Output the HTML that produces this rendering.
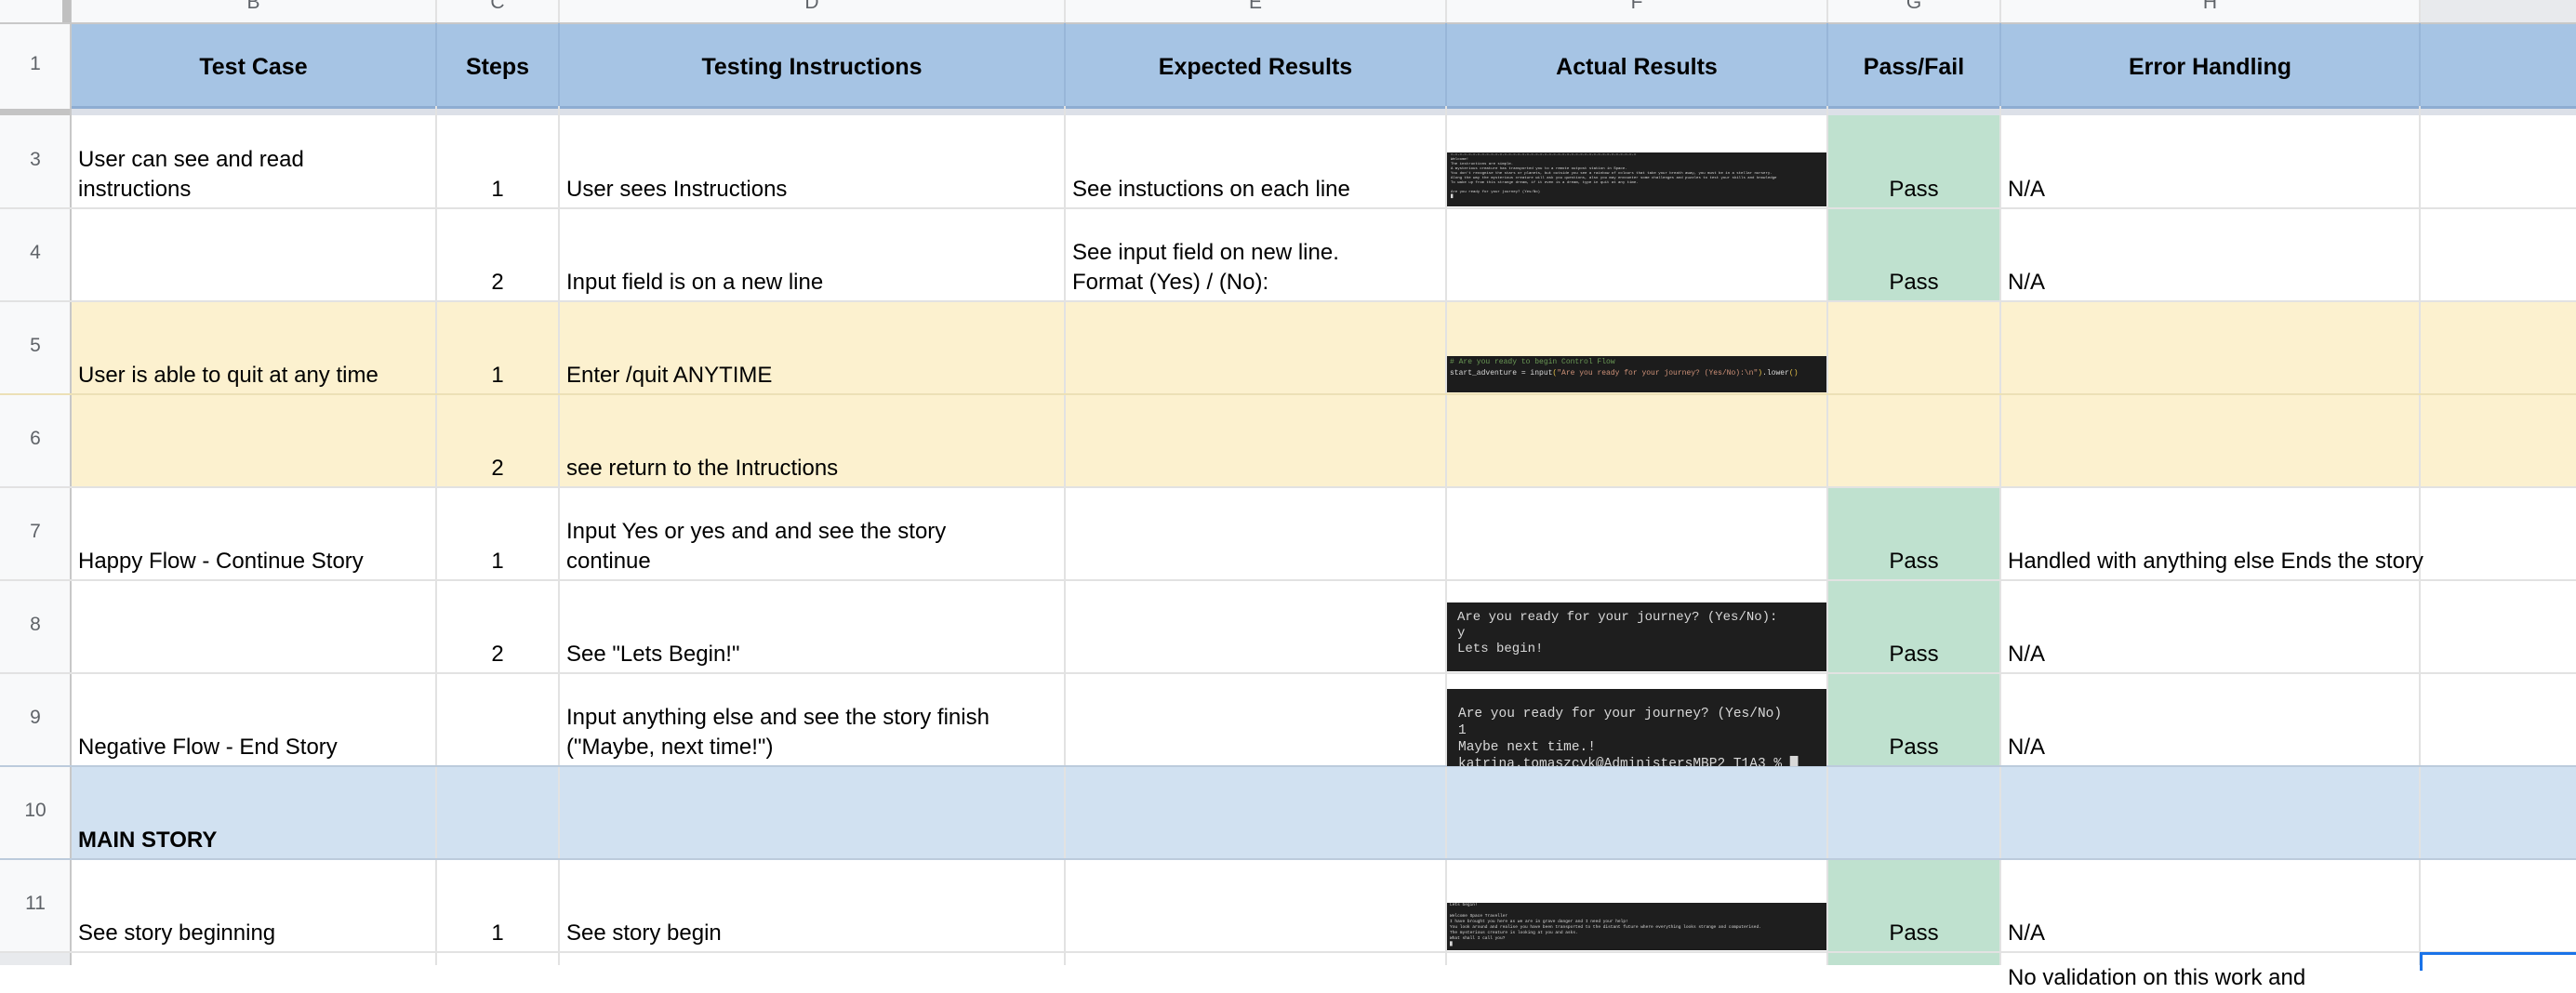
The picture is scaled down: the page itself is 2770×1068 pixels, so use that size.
<!DOCTYPE html>
<html><head><meta charset="utf-8">
<style>
*{margin:0;padding:0;box-sizing:border-box}
body{width:2770px;height:1038px;overflow:hidden;background:#fff;position:relative;font-family:"Liberation Sans",Arial,sans-serif}
.a{position:absolute}
.v{position:absolute;top:0;width:2px;height:1038px;background:#e2e2e2}
.h{position:absolute;left:0;width:2770px;height:2px;background:#e2e2e2}
.t{position:absolute;display:flex;align-items:flex-end;padding:0 8px 4px;font-size:24px;line-height:32px;color:#000;white-space:nowrap;height:100px}
.r{justify-content:center;width:132px;padding:0 0 4px}
.c{justify-content:center}
.hd{position:absolute;top:28px;height:89px;display:flex;align-items:center;justify-content:center;font-weight:bold;font-size:25px;color:#000}
.rn{position:absolute;left:0;width:76px;text-align:center;font-size:21px;color:#5f6368}
.cl{position:absolute;top:-9px;text-align:center;font-size:21px;color:#5f6368}
.term{position:absolute;background:#1e1e1e;color:#d8d8d8;font-family:"Liberation Mono","DejaVu Sans Mono",monospace;white-space:pre;overflow:hidden}
</style></head><body>
<div class="a" style="left:0;top:0;width:2770px;height:25px;background:#f8f9fa"></div>
<div class="a" style="left:2602px;top:0;width:168px;height:25px;background:#e8eaed"></div>
<div class="a" style="left:0;top:25px;width:76px;height:99px;background:#f8f9fa"></div>
<div class="a" style="left:0;top:124px;width:76px;height:914px;background:#f8f9fa"></div>
<div class="a" style="left:0;top:1024px;width:76px;height:14px;background:#e8eaed"></div>
<div class="a" style="left:76px;top:25px;width:2694px;height:89px;background:#a6c4e4"></div>
<div class="a" style="left:76px;top:114px;width:2694px;height:3px;background:#8eadd2"></div>
<div class="a" style="left:76px;top:117px;width:2694px;height:7px;background:#dce0e8"></div>
<div class="a" style="left:0;top:117px;width:76px;height:7px;background:#c4c4c4"></div>
<div class="a" style="left:76px;top:324px;width:2694px;height:200px;background:#fcf1cf"></div>
<div class="a" style="left:76px;top:824px;width:2694px;height:100px;background:#d1e1f1"></div>
<div class="a" style="left:1965px;top:124px;width:186px;height:200px;background:#bfe1cf"></div>
<div class="a" style="left:1965px;top:524px;width:186px;height:300px;background:#bfe1cf"></div>
<div class="a" style="left:1965px;top:924px;width:186px;height:114px;background:#bfe1cf"></div>
<div class="v" style="left:75px;background:#c8c8c8"></div>
<div class="v" style="left:468px"></div><div class="v" style="left:600px"></div>
<div class="v" style="left:1144px"></div><div class="v" style="left:1554px"></div>
<div class="v" style="left:1964px"></div><div class="v" style="left:2150px"></div>
<div class="v" style="left:2601px"></div>
<div class="a" style="left:67px;top:0;width:9px;height:25px;background:#c0c0c0"></div>
<div class="h" style="top:24px;background:#c8c8c8"></div>
<div class="h" style="top:223px"></div><div class="h" style="top:323px"></div>
<div class="h" style="top:423px;background:#ece0b6"></div><div class="h" style="top:523px"></div>
<div class="h" style="top:623px"></div><div class="h" style="top:723px"></div>
<div class="h" style="top:823px;background:#bccbdc"></div><div class="h" style="top:923px;background:#bccbdc"></div>
<div class="h" style="top:1023px"></div>
<div class="a" style="left:468px;top:25px;width:2px;height:89px;background:#98b6d8"></div>
<div class="a" style="left:600px;top:25px;width:2px;height:89px;background:#98b6d8"></div>
<div class="a" style="left:1144px;top:25px;width:2px;height:89px;background:#98b6d8"></div>
<div class="a" style="left:1554px;top:25px;width:2px;height:89px;background:#98b6d8"></div>
<div class="a" style="left:1964px;top:25px;width:2px;height:89px;background:#98b6d8"></div>
<div class="a" style="left:2150px;top:25px;width:2px;height:89px;background:#98b6d8"></div>
<div class="a" style="left:2601px;top:25px;width:2px;height:89px;background:#98b6d8"></div>

<div class="cl" style="left:76px;width:393px">B</div>
<div class="cl" style="left:469px;width:132px">C</div>
<div class="cl" style="left:601px;width:544px">D</div>
<div class="cl" style="left:1145px;width:410px">E</div>
<div class="cl" style="left:1555px;width:410px">F</div>
<div class="cl" style="left:1965px;width:186px">G</div>
<div class="cl" style="left:2151px;width:451px">H</div>

<div class="rn" style="top:57px">1</div>
<div class="rn" style="top:160px">3</div>
<div class="rn" style="top:260px">4</div>
<div class="rn" style="top:360px">5</div>
<div class="rn" style="top:460px">6</div>
<div class="rn" style="top:560px">7</div>
<div class="rn" style="top:660px">8</div>
<div class="rn" style="top:760px">9</div>
<div class="rn" style="top:860px">10</div>
<div class="rn" style="top:960px">11</div>

<div class="hd" style="left:76px;width:393px">Test Case</div>
<div class="hd" style="left:469px;width:132px">Steps</div>
<div class="hd" style="left:601px;width:544px">Testing Instructions</div>
<div class="hd" style="left:1145px;width:410px">Expected Results</div>
<div class="hd" style="left:1555px;width:410px">Actual Results</div>
<div class="hd" style="left:1965px;width:186px">Pass/Fail</div>
<div class="hd" style="left:2151px;width:451px">Error Handling</div>

<div class="t" style="left:76px;top:124px">User can see and read<br>instructions</div>
<div class="t r" style="left:469px;top:124px">1</div>
<div class="t" style="left:601px;top:124px">User sees Instructions</div>
<div class="t" style="left:1145px;top:124px">See instuctions on each line</div>
<div class="t c" style="left:1965px;top:124px;width:186px">Pass</div>
<div class="t" style="left:2151px;top:124px">N/A</div>
<div class="t r" style="left:469px;top:224px">2</div>
<div class="t" style="left:601px;top:224px">Input field is on a new line</div>
<div class="t" style="left:1145px;top:224px">See input field on new line.<br>Format (Yes) / (No):</div>
<div class="t c" style="left:1965px;top:224px;width:186px">Pass</div>
<div class="t" style="left:2151px;top:224px">N/A</div>
<div class="t" style="left:76px;top:324px">User is able to quit at any time</div>
<div class="t r" style="left:469px;top:324px">1</div>
<div class="t" style="left:601px;top:324px">Enter /quit ANYTIME</div>
<div class="t r" style="left:469px;top:424px">2</div>
<div class="t" style="left:601px;top:424px">see return to the Intructions</div>
<div class="t" style="left:76px;top:524px">Happy Flow - Continue Story</div>
<div class="t r" style="left:469px;top:524px">1</div>
<div class="t" style="left:601px;top:524px">Input Yes or yes and and see the story<br>continue</div>
<div class="t c" style="left:1965px;top:524px;width:186px">Pass</div>
<div class="t" style="left:2151px;top:524px">Handled with anything else Ends the story</div>
<div class="t r" style="left:469px;top:624px">2</div>
<div class="t" style="left:601px;top:624px">See "Lets Begin!"</div>
<div class="t c" style="left:1965px;top:624px;width:186px">Pass</div>
<div class="t" style="left:2151px;top:624px">N/A</div>
<div class="t" style="left:76px;top:724px">Negative Flow - End Story</div>
<div class="t" style="left:601px;top:724px">Input anything else and see the story finish<br>("Maybe, next time!")</div>
<div class="t c" style="left:1965px;top:724px;width:186px">Pass</div>
<div class="t" style="left:2151px;top:724px">N/A</div>
<div class="t" style="left:76px;top:824px;font-weight:bold">MAIN STORY</div>
<div class="t" style="left:76px;top:924px">See story beginning</div>
<div class="t r" style="left:469px;top:924px">1</div>
<div class="t" style="left:601px;top:924px">See story begin</div>
<div class="t c" style="left:1965px;top:924px;width:186px">Pass</div>
<div class="t" style="left:2151px;top:924px">N/A</div>
<div class="a" style="left:2159px;top:1036px;font-size:24px;line-height:32px;white-space:nowrap">No validation on this work and</div>
<div class="a" style="left:2602px;top:1024px;width:168px;height:20px;border:3px solid #1a73e8;border-right:none;border-bottom:none"></div>

<div class="term" style="left:1556px;top:164px;width:408px;height:58px;font-size:4px;line-height:5px;padding:1px 4px">=-=-=-=-=-=-=-=-=-=-=-=-=-=-=-=-=-=-=-=-=-=-=-=-=-=-=-=-=-=-=-=-=-=-=-=-=-=-=-=-=-=
Welcome!
The instructions are simple.
A mysterious creature has transported you to a remote outpost station in Space.
You don't recognise the stars or planets, but outside you see a rainbow of colours that take your breath away, you must be in a stellar nursery.
Along the way the mysterious creature will ask you questions, also you may encounter some challenges and puzzles to test your skills and knowledge
To wake up from this strange dream, if it even is a dream, type in quit at any time.

Are you ready for your journey? (Yes/No)
&#9608;</div>
<div class="term" style="left:1556px;top:383px;width:408px;height:39px;font-size:8px;line-height:12px;padding:1px 3px;background:#1c1c1c"><span style="color:#6a9955"># Are you ready to begin Control Flow</span>
start_adventure = input<span style="color:#e8c34a">(</span><span style="color:#ce9178">"Are you ready for your journey? (Yes/No):\n"</span><span style="color:#e8c34a">)</span>.lower<span style="color:#e8c34a">()</span></div>
<div class="term" style="left:1556px;top:648px;width:408px;height:74px;font-size:14px;line-height:17px;padding:8px 11px">Are you ready for your journey? (Yes/No):
y
Lets begin!</div>
<div class="term" style="left:1556px;top:741px;width:408px;height:83px;font-size:14.5px;line-height:18px;padding:18px 12px 0">Are you ready for your journey? (Yes/No)
1
Maybe next time.!
katrina.tomaszcyk@AdministersMBP2 T1A3 % &#9608;</div>
<div class="term" style="left:1556px;top:971px;width:408px;height:51px;font-size:4.5px;line-height:6px;padding:0 3px">Lets begin!

Welcome Space Traveller
I have brought you here as we are in grave danger and I need your help!
You look around and realise you have been transported to the distant future where everything looks strange and computerised.
The mysterious creature is looking at you and asks.
What shall I call you?
&#9608;</div>
</body></html>
